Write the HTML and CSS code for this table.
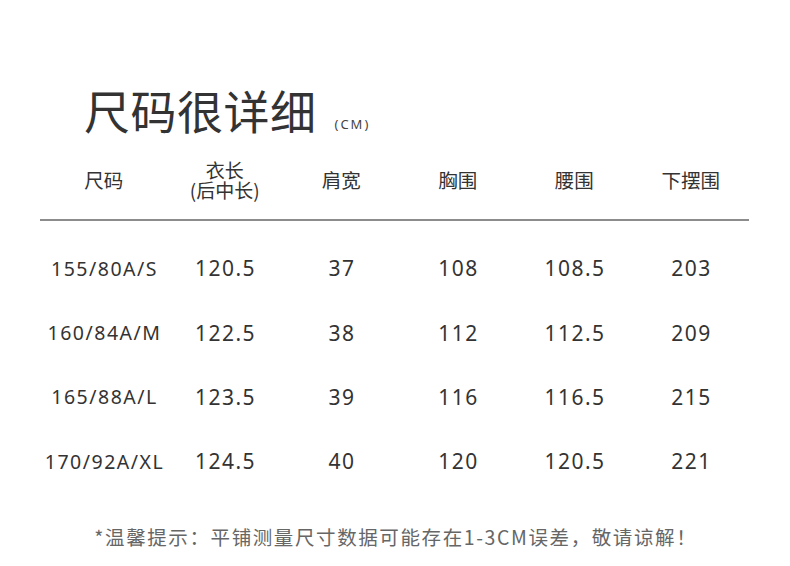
FILE: index.html
```html
<!DOCTYPE html>
<html lang="zh">
<head>
<meta charset="utf-8">
<link rel="stylesheet" href="styles.css">
</head>
<body>
<div class="page">
  <div class="title-row">
    <h1 class="title">尺码很详细</h1>
    <span class="unit">(CM)</span>
  </div>
  <div class="table">
    <div class="row head">
      <div class="cell first">尺码</div>
      <div class="cell two"><span class="ln">衣长</span><span class="ln">(后中长)</span></div>
      <div class="cell">肩宽</div>
      <div class="cell">胸围</div>
      <div class="cell">腰围</div>
      <div class="cell">下摆围</div>
    </div>
    <div class="rule"></div>
    <div class="row data"><div class="cell first sz">155/80A/S</div><div class="cell">120.5</div><div class="cell">37</div><div class="cell">108</div><div class="cell">108.5</div><div class="cell">203</div></div>
    <div class="row data"><div class="cell first sz">160/84A/M</div><div class="cell">122.5</div><div class="cell">38</div><div class="cell">112</div><div class="cell">112.5</div><div class="cell">209</div></div>
    <div class="row data"><div class="cell first sz">165/88A/L</div><div class="cell">123.5</div><div class="cell">39</div><div class="cell">116</div><div class="cell">116.5</div><div class="cell">215</div></div>
    <div class="row data"><div class="cell first sz">170/92A/XL</div><div class="cell">124.5</div><div class="cell">40</div><div class="cell">120</div><div class="cell">120.5</div><div class="cell">221</div></div>
  </div>
  <p class="note">*温馨提示：平铺测量尺寸数据可能存在1-3CM误差，敬请谅解！</p>
</div>
</body>
</html>
```
FILE: styles.css
```css
html, body {
  margin: 0;
  padding: 0;
  background: #fff;
}
body {
  font-family: "Noto Sans CJK SC", "Noto Sans", sans-serif;
  color: #333;
}
.page {
  width: 790px;
  height: 566px;
  box-sizing: border-box;
  padding-top: 80px;
}
.title-row {
  display: flex;
  align-items: baseline;
  padding-left: 84px;
  height: 58px;
}
.title {
  margin: 0;
  font-weight: 400;
  font-size: 46px;
  line-height: 58px;
  color: #333;
  letter-spacing: 0.5px;
}
.unit {
  font-family: "Noto Sans", "Noto Sans CJK SC", sans-serif;
  font-size: 13px;
  margin-left: 18px;
  letter-spacing: 2px;
  color: #444;
}
.table {
  margin-top: 14px;
}
.row {
  display: grid;
  grid-template-columns: repeat(6, 116.5px);
  padding-left: 50px;
  align-items: center;
}
.row.head {
  height: 56px;
  font-size: 19.5px;
  line-height: 22px;
}
.cell {
  display: flex;
  justify-content: center;
  white-space: nowrap;
}
.cell.first {
  padding-right: 9px;
}
.cell.two {
  flex-direction: column;
  align-items: center;
  font-size: 19px;
}
.ln {
  display: block;
  line-height: 20px;
  height: 20px;
}
.rule {
  margin-left: 40px;
  width: 709px;
  height: 2px;
  background: #8c8c8c;
  margin-top: 11px;
}
.row.data {
  height: 64.4px;
  font-family: "Noto Sans", "Noto Sans CJK SC", sans-serif;
  font-size: 21px;
  letter-spacing: 1.5px;
}
.row.data .cell {
  padding-left: 1.5px;
}
.rule + .row.data {
  margin-top: 15px;
}
.cell.sz {
  font-size: 19.5px;
  letter-spacing: 1.5px;
}
.note {
  margin: 28px 0 0;
  text-align: center;
  font-size: 19.5px;
  color: #666;
  letter-spacing: 1.6px;
  padding-left: 1.6px;
}
```
